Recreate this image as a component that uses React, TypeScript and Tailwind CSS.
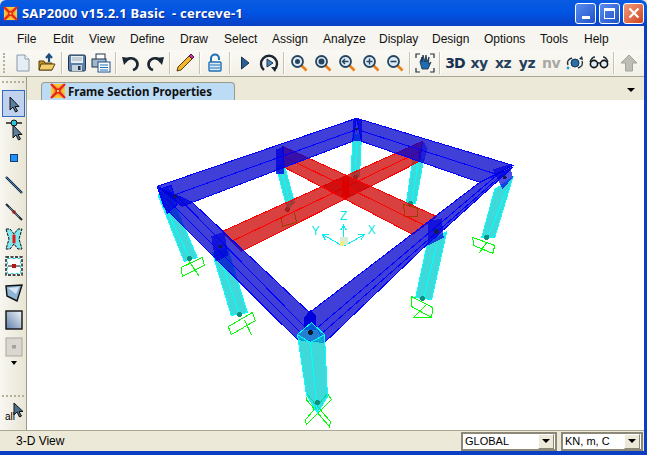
import type { ReactNode } from "react";

const menus = [
  { label: "File", w: "w-[36px]" },
  { label: "Edit", w: "w-[36px]" },
  { label: "View", w: "w-[41px]" },
  { label: "Define", w: "w-[50px]" },
  { label: "Draw", w: "w-[44px]" },
  { label: "Select", w: "w-[48px]" },
  { label: "Assign", w: "w-[51px]" },
  { label: "Analyze", w: "w-[56px]" },
  { label: "Display", w: "w-[53px]" },
  { label: "Design", w: "w-[52px]" },
  { label: "Options", w: "w-[56px]" },
  { label: "Tools", w: "w-[44px]" },
  { label: "Help", w: "w-[40px]" },
];

const Logo = ({ className }: { className: string }) => (
  <svg viewBox="0 0 16 16" className={className}>
    <rect x="1" y="1" width="14" height="14" fill="#f7c93a" />
    <path d="M1 1 L5 2 L8 4 L11 2 L15 1 L14 5 L12 8 L14 11 L15 15 L11 14 L8 12 L5 14 L1 15 L2 11 L4 8 L2 5 Z" fill="#f2a52e" />
    <path d="M1 1 L15 15 M15 1 L1 15" stroke="#e8231f" strokeWidth="2.4" />
    <rect x="5.5" y="5.5" width="5" height="5" fill="#e8231f" />
    <rect x="7" y="7" width="2" height="2" fill="#f7d84a" />
  </svg>
);

const Sep = () => <div className="w-[6px] h-[22px] flex justify-center"><div className="w-[2px] h-full border-l border-[#c5c2b0] bg-white/80" /></div>;

const Tool = ({ children }: { children: ReactNode }) => (
  <div className="w-6 h-6 flex items-center justify-center">{children}</div>
);

const Ico = ({ children }: { children: ReactNode }) => (
  <svg viewBox="0 0 20 20" className="w-5 h-5">{children}</svg>
);

const Lens = ({ children, ring = "#27445f" }: { children?: ReactNode; ring?: string }) => (
  <Ico>
    <path d="M12.5 12.5 L17.5 17.5" stroke="#e8801c" strokeWidth="2.6" />
    <circle cx="8.5" cy="8.5" r="5.5" fill="#dcebf7" stroke={ring} strokeWidth="1.8" />
    {children}
  </Ico>
);

const AxisText = ({ t, gray }: { t: string; gray?: boolean }) => (
  <span className={`font-['DejaVu_Sans'] font-bold text-[14px] leading-none tracking-[-0.5px] ${gray ? "text-[#a8a8a4]" : "text-[#25405c]"}`}>{t}</span>
);

function TopToolbar() {
  return (
    <div className="h-[27px] flex items-center pl-[11px] bg-gradient-to-b from-[#faf9f4] to-[#f2f0e6] border-b border-[#a9a692] relative">
      <div className="absolute left-[3px] top-[3px] h-[20px] w-[2px] border-l-2 border-dotted border-[#b4b09c]" />
      <Tool><Ico><path d="M4 2 H12 L16 6 V18 H4 Z" fill="#e6edf4" stroke="#8b9aa8" /><path d="M12 2 V6 H16" fill="#fff" stroke="#8b9aa8" /></Ico></Tool>
      <Tool><Ico><path d="M2 8 H7 L8 10 H15 V17 H2 Z" fill="#c98f1e" stroke="#5a4210" /><path d="M4 11 H18 L15 17 H2 Z" fill="#f3cf6b" stroke="#5a4210" /><path d="M12 9 V3 M9 5 L12 1.5 L15 5" stroke="#1d4f7c" strokeWidth="2.2" fill="none" /></Ico></Tool>
      <Sep />
      <Tool><Ico><rect x="1.5" y="2" width="17" height="16" rx="1.5" fill="#5b7fa6" stroke="#20364f" /><rect x="4" y="3" width="12" height="7" fill="#e9eef3" /><path d="M5 5 H15 M5 7 H15" stroke="#9ab" /><rect x="5" y="12" width="10" height="6" fill="#c7d1da" /><rect x="11" y="13" width="2.5" height="4" fill="#20364f" /></Ico></Tool>
      <Tool><Ico><rect x="5" y="1" width="9" height="7" fill="#fff" stroke="#20364f" /><rect x="1" y="6" width="14" height="8" fill="#9fb7cc" stroke="#20364f" /><rect x="7" y="9" width="12" height="10" fill="#fff" stroke="#1c4f8c" /><path d="M9 12 H17 M9 14.5 H17 M9 17 H17" stroke="#1c6fb8" /></Ico></Tool>
      <Sep />
      <Tool><Ico><path d="M4 9 A6.5 6 0 1 1 12 17" fill="none" stroke="#1b2733" strokeWidth="2.6" /><path d="M1 4 L9 5 L3 12 Z" fill="#1b2733" /></Ico></Tool>
      <Tool><Ico><path d="M16 9 A6.5 6 0 1 0 8 17" fill="none" stroke="#1b2733" strokeWidth="2.6" /><path d="M19 4 L11 5 L17 12 Z" fill="#1b2733" /></Ico></Tool>
      <Sep />
      <Tool><Ico><path d="M3 14 L14 3 L17 6 L6 17 L2 18 Z" fill="#f3b72b" stroke="#5a3b0a" /><path d="M14 3 L16 1 L19 4 L17 6 Z" fill="#c22fa8" stroke="#5a1a50" /></Ico></Tool>
      <Sep />
      <Tool><Ico><path d="M6 10 V5.5 A4 4 0 0 1 14 5.5 V7" fill="none" stroke="#1f6fb5" strokeWidth="2" /><rect x="4" y="9" width="12" height="9" rx="1" fill="#dcebf7" stroke="#1f6fb5" strokeWidth="1.4" /><path d="M5 12 H15 M5 15 H15" stroke="#1f6fb5" /></Ico></Tool>
      <Sep />
      <Tool><Ico><path d="M6.5 4 L14 10 L6.5 16 Z" fill="#2a5f94" stroke="#17324f" /></Ico></Tool>
      <Tool><Ico><path d="M5 17 A8 8 0 1 1 15 17" fill="none" stroke="#1b2733" strokeWidth="2.4" /><path d="M12 14 L18 14 L16 19 Z" fill="#1b2733" /><path d="M8 6 L14 10 L8 14 Z" fill="#4a86bd" stroke="#17324f" /></Ico></Tool>
      <Sep />
      <Tool><Lens><circle cx="8.5" cy="8.5" r="2.5" fill="#27445f" /></Lens></Tool>
      <Tool><Lens><circle cx="8.5" cy="8.5" r="3" fill="#27445f" /></Lens></Tool>
      <Tool><Lens><path d="M11.5 8.5 H6 M8 6 L5.5 8.5 L8 11" fill="none" stroke="#27445f" strokeWidth="1.4" /></Lens></Tool>
      <Tool><Lens><path d="M8.5 5.5 V11.5 M5.5 8.5 H11.5" stroke="#27445f" strokeWidth="1.4" /></Lens></Tool>
      <Tool><Lens><path d="M5.5 8.5 H11.5" stroke="#27445f" strokeWidth="1.6" /></Lens></Tool>
      <Sep />
      <Tool><Ico><path d="M1 5 V1 H5 M15 1 H19 V5 M19 15 V19 H15 M5 19 H1 V15" fill="none" stroke="#20303f" strokeWidth="1.2" /><path d="M5 9 L7 4 V9 L8 2 L10 9 L11 2 L12 9 L14 4 L13.5 11 L16 9 L13 16 H7 Z" fill="#1f6db3" stroke="#12283d" strokeWidth="0.8" /></Ico></Tool>
      <Sep />
      <Tool><span className="font-['DejaVu_Sans'] font-bold text-[14px] leading-none tracking-[-1px] text-[#17324f]">3D</span></Tool>
      <Tool><AxisText t="xy" /></Tool>
      <Tool><AxisText t="xz" /></Tool>
      <Tool><AxisText t="yz" /></Tool>
      <Tool><AxisText t="nv" gray /></Tool>
      <Tool><Ico><path d="M3 12 Q1 7 7 5 M17 8 Q19 13 13 15" fill="none" stroke="#20303f" strokeWidth="1.4" /><circle cx="10" cy="10" r="4" fill="#2b6fa8" stroke="#17324f" /><circle cx="3" cy="15" r="1.4" fill="#2a9ad0" /><path d="M17 3 L18 7 L14 6 Z" fill="#20303f" /></Ico></Tool>
      <Tool><Ico><path d="M1 9 Q3 4 6 4 M19 9 Q17 4 14 4 M8 10 H12" fill="none" stroke="#20303f" strokeWidth="1.4" /><circle cx="5" cy="11" r="3.6" fill="#dcebf7" stroke="#111" strokeWidth="1.6" /><circle cx="15" cy="11" r="3.6" fill="#dcebf7" stroke="#111" strokeWidth="1.6" /></Ico></Tool>
      <Sep />
      <Tool><Ico><path d="M10 2 L18 10 H13.5 V18 H6.5 V10 H2 Z" fill="#bdbdb6" stroke="#a3a39c" /></Ico></Tool>
    </div>
  );
}

const Side = ({ children, active }: { children: ReactNode; active?: boolean }) => (
  <div className={`h-[27px] w-[23px] flex items-center justify-center border ${active ? "border-[#316ac5] bg-[#c1d2ee]" : "border-transparent"}`}>{children}</div>
);

const Ic = ({ children }: { children: ReactNode }) => <svg viewBox="0 0 20 20" className="w-5 h-5">{children}</svg>;

const Cursor = ({ x = 6, y = 3 }: { x?: number; y?: number }) => (
  <path transform={`translate(${x} ${y})`} d="M0 0 V13 L3 10 L5.5 15 L7.5 14 L5 9.5 H9 Z" fill="#5d7f9e" stroke="#111" strokeWidth="1" />
);

function LeftToolbar() {
  return (
    <div className="w-[27px] flex flex-col bg-gradient-to-r from-[#f7f6f0] to-[#e9e6d6] border-r border-[#9c9a88] pl-[2px]">
      <div className="h-[13px] flex items-start pt-[4px]"><div className="w-[22px] border-t-2 border-dotted border-[#b4b09c]" /></div>
      <Side active><Ic><Cursor /></Ic></Side>
      <Side><svg viewBox="0 0 20 24" className="w-5 h-6 -mt-[3px]"><path d="M2 6 H18" stroke="#111" strokeWidth="1.4" /><circle cx="10" cy="6" r="3" fill="#2bc5d8" stroke="#111" /><Cursor x={9} y={8} /></svg></Side>
      <Side><Ic><rect x="6.5" y="6.5" width="7" height="7" fill="#1e90ff" stroke="#15406b" /></Ic></Side>
      <Side><Ic><path d="M2 2 L18 18" stroke="#1b2733" strokeWidth="2.4" /><path d="M2 2 L18 18" stroke="#2f7fd0" strokeWidth="1" /></Ic></Side>
      <Side><Ic><path d="M2 2 L18 18" stroke="#1b2733" strokeWidth="2" /><path d="M5 5 L15 15" stroke="#5d86ad" strokeWidth="1" /><rect x="8.5" y="8.5" width="3" height="3" fill="#a01818" /></Ic></Side>
      <Side><svg viewBox="0 0 18 22" className="w-[18px] h-[22px]"><path d="M1 1 L5 1 L9 6 L13 1 L17 1 L14 11 L17 21 L13 21 L9 16 L5 21 L1 21 L4 11 Z" fill="#7fe9ef" stroke="#111" strokeDasharray="3 1" /><rect x="7.5" y="6.5" width="3" height="9" rx="1" fill="#e81818" /></svg></Side>
      <Side><svg viewBox="0 0 18 20" className="w-[18px] h-5"><rect x="1" y="1" width="16" height="18" fill="#fff" stroke="#111" strokeWidth="1.4" strokeDasharray="3 1.5" /><rect x="2.5" y="2.5" width="13" height="15" fill="none" stroke="#28d8e0" strokeDasharray="3 2" /><path d="M3 10 H15" stroke="#111" /><rect x="7" y="8" width="4" height="4" fill="#b01818" /></svg></Side>
      <Side><Ic><path d="M2 3 L18 2 L13 18 L3 13 Z" fill="#8fb4d6" stroke="#111" strokeWidth="1.4" /><path d="M4 5 L15 4 L12 11 Z" fill="#d6e6f4" /></Ic></Side>
      <Side><svg viewBox="0 0 18 20" className="w-[18px] h-5"><defs><linearGradient id="shell" x1="0" y1="1" x2="1" y2="0"><stop offset="0" stopColor="#5f7fa8" /><stop offset="1" stopColor="#f2f6fa" /></linearGradient></defs><rect x="1" y="1" width="16" height="18" fill="url(#shell)" stroke="#111" strokeWidth="1.4" /></svg></Side>
      <Side><svg viewBox="0 0 18 20" className="w-[18px] h-5"><rect x="1" y="1" width="16" height="18" fill="#d9d7cf" stroke="#a9a79d" /><rect x="7" y="8" width="4" height="3.5" fill="#a3a19a" /></svg></Side>
      <div className="h-[10px] w-[23px] flex justify-center items-start pt-px"><div className="w-0 h-0 border-x-[3px] border-x-transparent border-t-[4px] border-t-black" /></div>
      <div className="flex-1" />
      <div className="h-[5px] w-[22px] border-t-2 border-dotted border-[#b4b09c]" />
      <div className="h-[30px] w-[23px] relative flex items-end pb-[8px] pl-[3px]">
        <span className="font-['Liberation_Sans'] text-[10px] leading-none text-black">all</span>
        <svg viewBox="0 0 12 18" className="absolute left-[11px] top-[2px] w-3 h-[18px]"><path d="M1 1 V13 L4 10 L6.5 15 L8.5 14 L6 9.5 H10 Z" fill="#4d6f8e" stroke="#111" /></svg>
      </div>
    </div>
  );
}

const Beam = ({ pts, lines, c }: { pts: string; lines: string[]; c: "b" | "r" }) => {
  const fill = c === "b" ? "#0000cc" : "#cc0000";
  const stroke = c === "b" ? "#0000ff" : "#ff0000";
  return (
    <g>
      <polygon points={pts} fill={fill} fillOpacity={0.75} stroke={stroke} />
      {lines.map((l, i) => <polyline key={i} points={l} fill="none" stroke={stroke} />)}
    </g>
  );
};

const Column = ({ pts, lines, dot }: { pts: string; lines: string[]; dot: [number, number] }) => (
  <g>
    <polygon points={pts} fill="#00cccc" fillOpacity={0.75} stroke="#00ffff" strokeWidth={1} />
    {lines.map((l, i) => <polyline key={i} points={l} fill="none" stroke="#00ffff" />)}
    <circle cx={dot[0]} cy={dot[1]} r={2.5} fill="#0a8f80" />
  </g>
);

const Support = ({ d }: { d: string }) => <path d={d} fill="none" stroke="#00ff00" strokeWidth={1} />;

function Frame() {
  return (
    <svg viewBox="28 101 616 329" shapeRendering="crispEdges" className="block w-full h-full">
      {/* supports */}
      <Support d="M182 268 L203 258 L205 266 L183 277 Z M190 262 L200 277" />
      <Support d="M229 327 L253 313 L256 321 L232 335 Z M245 320 L252 335" />
      <Support d="M308 395 L307 400 L330 427 L331 422 Z M328 394 L332 400 L307 425 L306 420 Z" />
      <Support d="M412 297 L433 308 L432 318 L412 307 Z M427 305 L414 318 H432" />
      <Support d="M473 238 L495 246 L493 254 L474 246 Z M487 243 L479 254" />
      <Support d="M282 218 L295 212 L297 223 L283 227 Z" />
      <Support d="M404 205 L418 209 L418 217 L405 217 Z" />

      {/* columns */}
      <Column pts="353,135 362,135 360,177 352,177" lines={["357,135 356,177"]} dot={[356, 178]} />
      <Column pts="277,168 285,166 295,203 288,210" lines={["281,167 291,206"]} dot={[288, 210]} />
      <Column pts="413,160 424,160 416,204 407,203" lines={["419,160 412,204"]} dot={[411, 204]} />
      <Column pts="159,196 168,188 198,258 185,262" lines={["168,212 191,260"]} dot={[190, 259]} />
      <Column pts="495,190 513,178 495,238 482,238" lines={["507,190 488,238"]} dot={[487, 238]} />
      <Column pts="213,253 228,248 248,313 232,316" lines={["222,262 240,315"]} dot={[240, 315]} />
      <Column pts="428,243 447,232 432,300 416,298" lines={["437,245 424,299"]} dot={[423, 299]} />

      {/* red cross beams */}
      <Beam c="r" pts="223,232 423,142 420,162 242,252" lines={["232,242 421,152"]} />
      <Beam c="r" pts="283,147 437,217 413,235 285,168" lines={["284,157 425,226"]} />
      <polygon points="342,179 349,178 349,198 342,197" fill="#dd0000" />

      {/* blue ring */}
      <Beam c="b" pts="158,187 357,119 353,142 193,203 183,207" lines={["171,197 355,131"]} />
      <Beam c="b" pts="357,119 513,166 480,183 362,142" lines={["360,131 497,175"]} />
      <Beam c="b" pts="158,187 193,203 310,313 325,343 298,340 165,208" lines={["176,195 304,326 312,328", "168,200 301,333"]} />
      <Beam c="b" pts="513,168 480,183 310,313 325,343 422,250" lines={["497,176 318,328", "505,173 321,335"]} />

      {/* joint blocks */}
      <polygon points="160,190 172,186 178,205 168,214" fill="#0000dd" fillOpacity={0.6} stroke="#0000ff" />
      <polygon points="277,150 285,147 285,175 277,175" fill="#0000dd" fillOpacity={0.8} />
      <polygon points="353,120 362,120 362,142 353,142" fill="#0000dd" fillOpacity={0.8} />
      <polygon points="212,237 225,232 229,256 216,262" fill="#0000dd" fillOpacity={0.7} />
      <polygon points="418,158 424,142 428,150 424,163" fill="#0000dd" fillOpacity={0.5} />
      <polygon points="493,170 510,165 513,178 503,190" fill="#0000dd" fillOpacity={0.7} />
      <polygon points="428,222 442,219 444,238 428,246" fill="#0000dd" fillOpacity={0.7} />
      <polygon points="305,318 311,310 317,316 317,330 305,330" fill="#0000dd" />
      <circle cx="176" cy="197" r="2" fill="#111a55" />
      <circle cx="221" cy="247" r="2" fill="#111a55" />
      <circle cx="505" cy="178" r="2" fill="#111a55" />
      <circle cx="437" cy="232" r="2.5" fill="#111a55" />
      <circle cx="357" cy="130" r="1.5" fill="#111a55" />

      {/* front column on top */}
      <polygon points="298,335 311,343 318,413 307,395" fill="#00cccc" fillOpacity={0.75} stroke="#00ffff" />
      <polygon points="311,343 325,335 328,397 318,413" fill="#00cccc" fillOpacity={0.75} stroke="#00ffff" />
      <polygon points="298,335 312,323 325,335 311,343" fill="#00cccc" fillOpacity={0.45} stroke="#00ffff" />
      <circle cx="311" cy="333" r="2.5" fill="#0a1a2a" />
      <circle cx="318" cy="403" r="2.5" fill="#0a8f80" />

      {/* global axes */}
      <g stroke="#00eeee" fill="none">
        <path d="M344 247 V226 M341 231 L344 226 L347 231" />
        <path d="M344 247 L323 235 M326 241 L323 235 L330 235" />
        <path d="M344 247 L365 235 M358 235 L365 235 L361 241" />
      </g>
      <rect x="340" y="238" width="8" height="8" fill="#d8ecd8" />
      <rect x="340" y="242" width="4" height="5" fill="#f0f080" />
      <text x="344" y="221" textAnchor="middle" className="font-['Liberation_Sans'] text-[12px]" fill="#00e8e8">Z</text>
      <text x="316" y="236" textAnchor="middle" className="font-['Liberation_Sans'] text-[12px]" fill="#00e8e8">Y</text>
      <text x="372" y="235" textAnchor="middle" className="font-['Liberation_Sans'] text-[12px]" fill="#00e8e8">X</text>
    </svg>
  );
}

const Combo = ({ value, w }: { value: string; w: string }) => (
  <div className={`${w} h-[19px] flex items-center bg-white border-2 border-[#8b8878] pl-[2px] pr-px`}>
    <span className="flex-1 font-['Liberation_Sans'] text-[11px] leading-none text-black">{value}</span>
    <div className="w-[16px] h-[15px] bg-[#ece9d8] border border-t-white border-l-white border-r-[#8b8878] border-b-[#8b8878] flex items-center justify-center">
      <div className="w-0 h-0 border-x-[4px] border-x-transparent border-t-[4px] border-t-black" />
    </div>
  </div>
);

export default function App() {
  return (
    <div className="w-[647px] h-[455px] flex flex-col overflow-hidden font-['Liberation_Sans'] bg-[#ece9d8] select-none">
      <div className="h-[26px] shrink-0 flex items-center pl-[3px] pr-[3px] rounded-t-[6px] bg-gradient-to-b from-[#0a5be0] via-[#0054e3] to-[#0a3fc4]">
        <Logo className="w-[15px] h-[15px]" />
        <span className="ml-[4px] flex-1 font-['Noto_Sans'] font-bold text-[13px] tracking-[0.2px] leading-none text-white whitespace-pre [text-shadow:1px_1px_0_#0a2a90]">SAP2000 v15.2.1 Basic  - cerceve-1</span>
        <div className="flex gap-[3px]">
          <div className="w-[21px] h-[21px] rounded-[3px] border border-white bg-gradient-to-br from-[#5b8cf0] to-[#1f50c8] flex items-end pl-[6px] pb-[4px]"><div className="w-[8px] h-[3px] bg-white" /></div>
          <div className="w-[21px] h-[21px] rounded-[3px] border border-white bg-gradient-to-br from-[#5b8cf0] to-[#1f50c8] flex items-center justify-center"><div className="w-[11px] h-[11px] border border-t-[3px] border-white" /></div>
          <div className="w-[21px] h-[21px] rounded-[3px] border border-white bg-gradient-to-br from-[#ef9a7a] to-[#d0401c] flex items-center justify-center">
            <svg viewBox="0 0 12 12" className="w-3 h-3"><path d="M1.5 1.5 L10.5 10.5 M10.5 1.5 L1.5 10.5" stroke="#fff" strokeWidth="2.2" /></svg>
          </div>
        </div>
      </div>

      <div className="flex-1 flex flex-col min-h-0 border-r-[3px] border-[#0a3fc4]">
        <div className="h-[24px] shrink-0 flex items-center pl-[17px] pt-[2px] bg-[#f6f5ef] text-[12px] text-[#111]">
          {menus.map((m) => (
            <span key={m.label} className={`${m.w} leading-none`}>{m.label}</span>
          ))}
        </div>
        <TopToolbar />
        <div className="flex-1 flex min-h-0">
          <LeftToolbar />
          <div className="flex-1 flex flex-col min-w-0">
            <div className="h-[23px] shrink-0 flex items-end pl-[14px] pr-[12px] bg-[#ece9d8] relative">
              <div className="w-[194px] h-[18px] flex items-center pl-[8px] rounded-t-[4px] bg-[#bcdcf6] border border-b-0 border-[#9c9a88]">
                <Logo className="w-4 h-4 -mt-[2px]" />
                <span className="ml-[2px] font-['Noto_Sans'] font-bold text-[11.5px] leading-none text-[#111]">Frame Section Properties</span>
              </div>
              <div className="absolute right-[9px] top-[11px] w-0 h-0 border-x-[4px] border-x-transparent border-t-[4px] border-t-black" />
            </div>
            <div className="flex-1 min-h-0 bg-white">
              <Frame />
            </div>
          </div>
        </div>
        <div className="h-[21px] shrink-0 flex items-center gap-[4px] pr-[1px] border-t border-[#a9a692] bg-[#ece9d8]">
          <span className="ml-[16px] flex-1 text-[12px] leading-none text-black">3-D View</span>
          <Combo value="GLOBAL" w="w-[96px]" />
          <Combo value="KN, m, C" w="w-[82px]" />
        </div>
      </div>
      <div className="h-[4px] shrink-0 bg-[#0a3fc4]" />
    </div>
  );
}
